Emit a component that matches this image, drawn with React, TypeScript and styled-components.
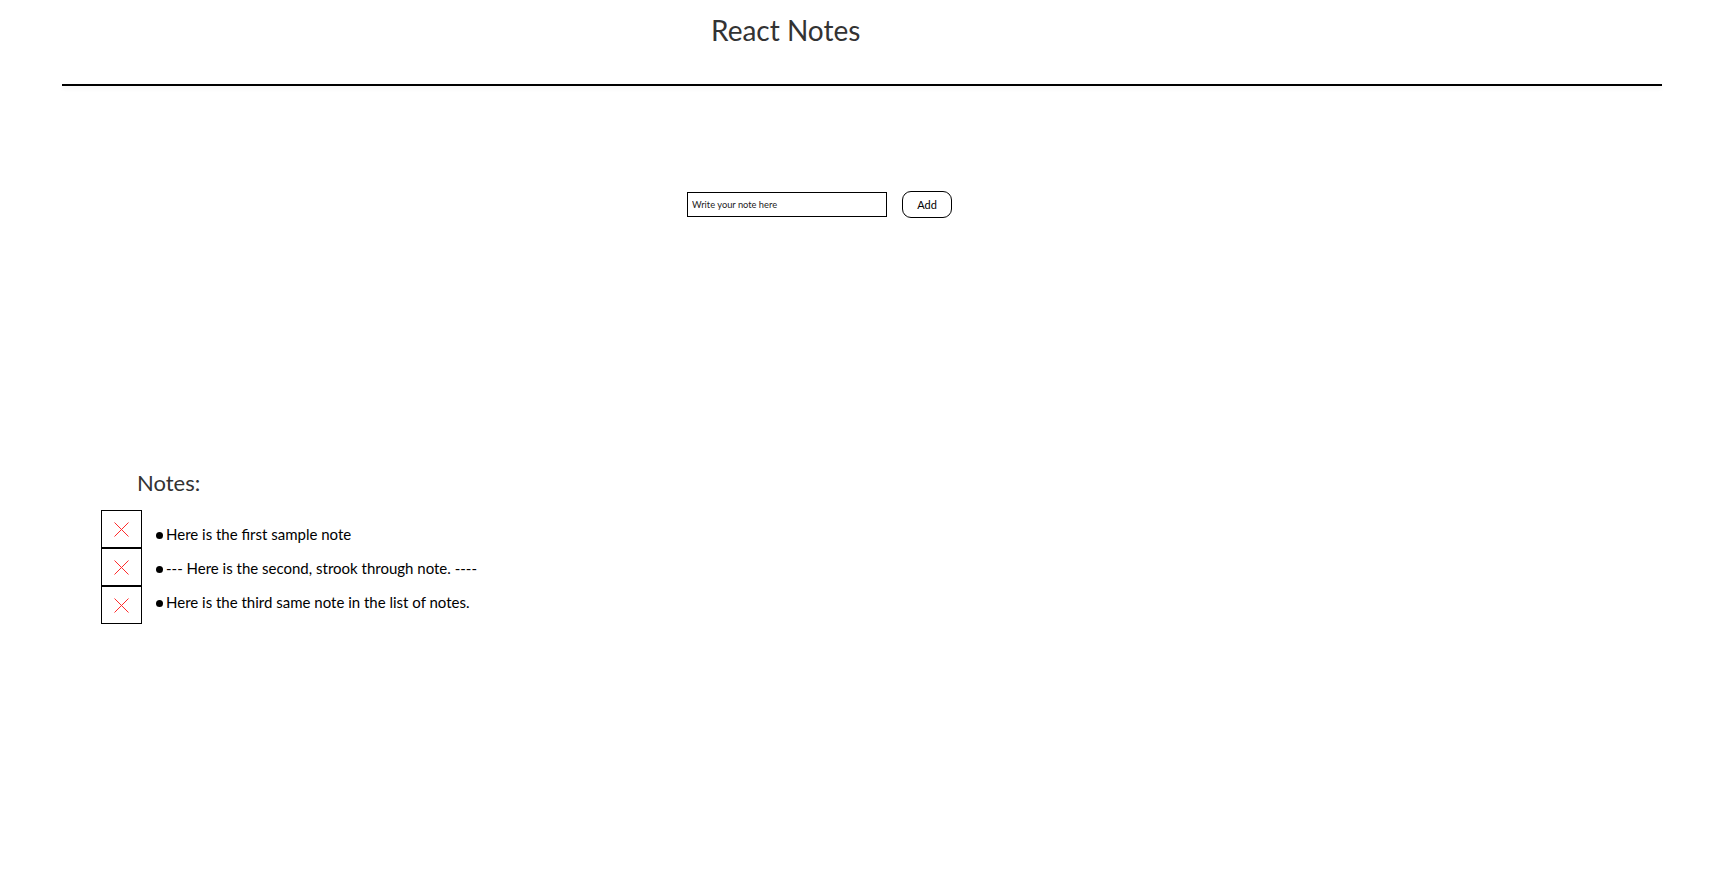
import React from "react";
import styled, { createGlobalStyle } from "styled-components";

const GlobalStyle = createGlobalStyle`
  html, body { margin: 0; padding: 0; background: #fff; }
  body { font-family: "Source Sans Pro", Lato, "Noto Sans", sans-serif; }
`;

const Page = styled.div`
  display: flex;
  flex-direction: column;
  min-height: 880px;
`;

const Header = styled.header`
  display: flex;
  flex-direction: column;
`;

const Title = styled.h1`
  margin: 10px 0 0 711px;
  font-size: 28px;
  line-height: 40px;
  font-weight: 400;
  color: #333;
`;

const Divider = styled.div`
  margin: 34px 0 0 62px;
  width: 1600px;
  height: 2px;
  background: #000;
  box-shadow: 0 2px 4px rgba(0, 0, 0, 0.08);
`;

const Form = styled.form`
  display: flex;
  align-items: center;
  gap: 15px;
  margin: 105px 0 0 687px;
`;

const NoteInput = styled.input`
  box-sizing: border-box;
  width: 200px;
  height: 25px;
  padding: 0 4px;
  border: 1px solid #000;
  border-radius: 0;
  font-family: inherit;
  font-size: 9.3px;
  outline: none;
  &::placeholder { color: #222; }
`;

const AddButton = styled.button`
  box-sizing: border-box;
  width: 50px;
  height: 27px;
  border: 1px solid #000;
  border-radius: 9px;
  background: #fff;
  font-family: inherit;
  font-size: 11px;
  color: #000;
  padding: 0;
`;

const NotesSection = styled.section`
  display: flex;
  flex-direction: column;
  margin-top: 250px;
`;

const NotesHeading = styled.h2`
  margin: 0 0 0 137px;
  font-size: 22px;
  line-height: 30px;
  font-weight: 400;
  color: #333;
`;

const NotesBody = styled.div`
  display: flex;
  align-items: flex-start;
  margin: 12px 0 0 101px;
`;

const ButtonColumn = styled.div`
  display: flex;
  flex-direction: column;
`;

const DeleteButton = styled.button`
  box-sizing: border-box;
  width: 41px;
  height: 38px;
  border: 1px solid #000;
  background: #fff;
  padding: 0;
  display: flex;
  align-items: center;
  justify-content: center;
`;

const NoteList = styled.ul`
  list-style: none;
  margin: 12px 0 0 14px;
  padding: 0;
  display: flex;
  flex-direction: column;
  gap: 10px;
`;

const NoteItem = styled.li`
  display: flex;
  align-items: center;
  font-size: 15px;
  line-height: 24px;
  color: #000;
  &::before {
    content: "";
    width: 7px;
    height: 7px;
    border-radius: 50%;
    background: #000;
    margin-right: 3px;
    margin-top: 3px;
  }
`;

const Cross = () => (
  <svg width="15" height="15" viewBox="0 0 15 15">
    <path d="M0.5 0.5 L14.5 14.5 M14.5 0.5 L0.5 14.5" stroke="#ff2a2a" strokeWidth="1" fill="none" />
  </svg>
);

const notes = [
  "Here is the first sample note",
  "--- Here is the second, strook through note. ----",
  "Here is the third same note in the list of notes.",
];

export default function App() {
  return (
    <Page>
      <GlobalStyle />
      <Header>
        <Title>React Notes</Title>
        <Divider />
      </Header>
      <Form onSubmit={(e) => e.preventDefault()}>
        <NoteInput placeholder="Write your note here" />
        <AddButton type="submit">Add</AddButton>
      </Form>
      <NotesSection>
        <NotesHeading>Notes:</NotesHeading>
        <NotesBody>
          <ButtonColumn>
            {notes.map((n) => (
              <DeleteButton key={n} aria-label="delete">
                <Cross />
              </DeleteButton>
            ))}
          </ButtonColumn>
          <NoteList>
            {notes.map((n) => (
              <NoteItem key={n}>{n}</NoteItem>
            ))}
          </NoteList>
        </NotesBody>
      </NotesSection>
    </Page>
  );
}
